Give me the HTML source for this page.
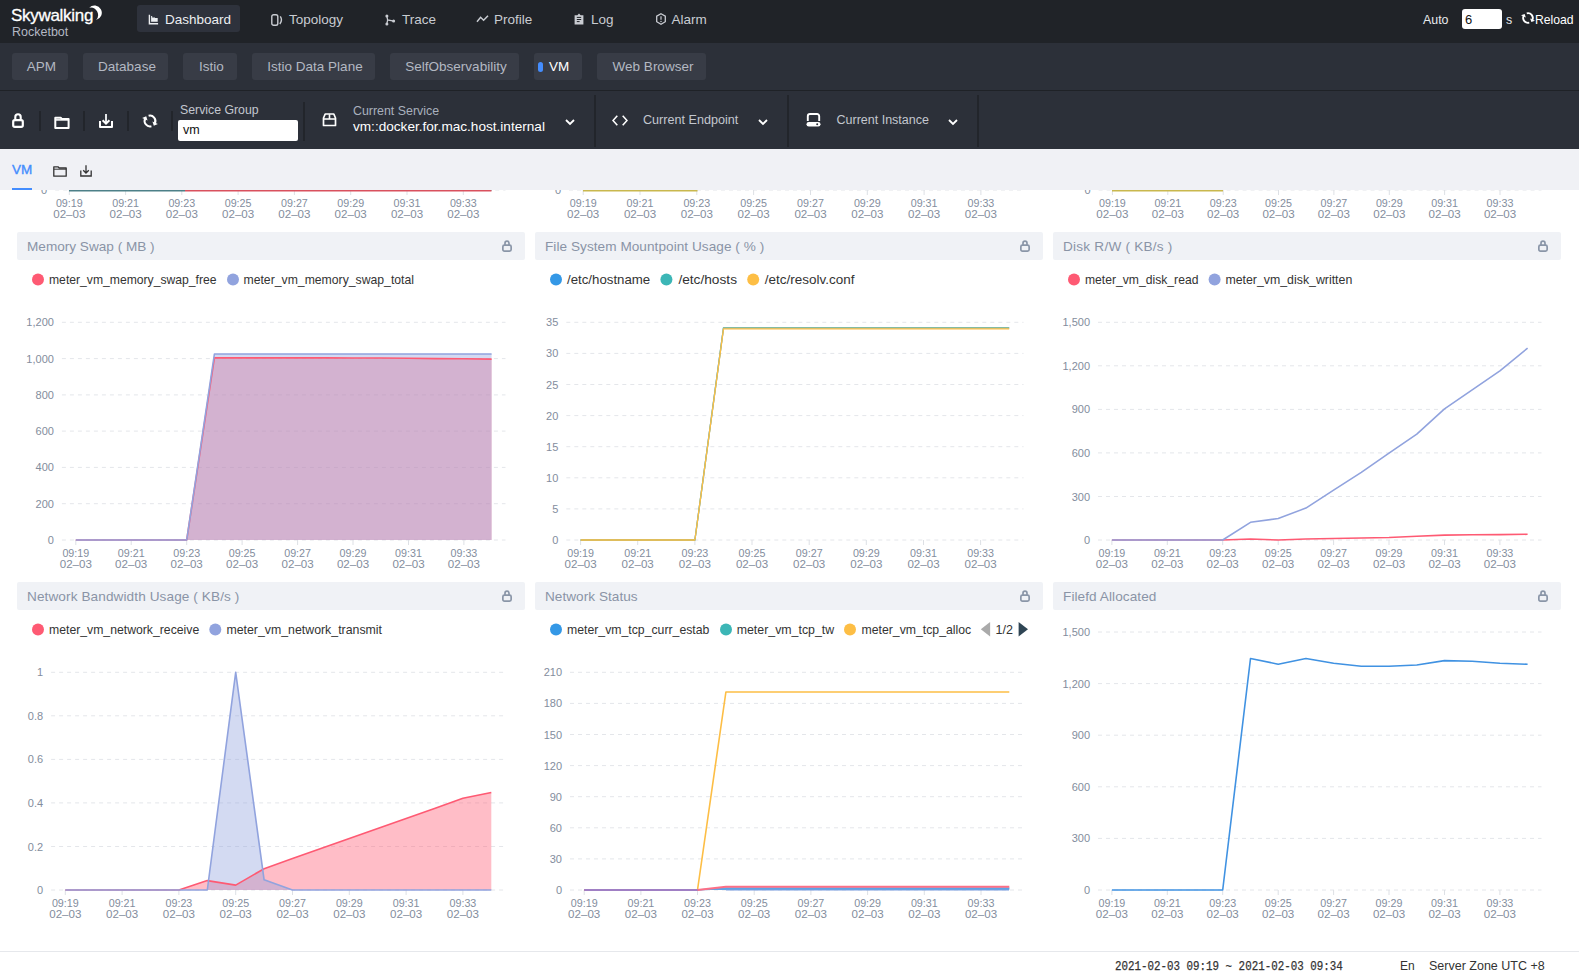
<!DOCTYPE html>
<html><head><meta charset="utf-8">
<style>
*{box-sizing:border-box}
html,body{margin:0;padding:0}
body{width:1579px;height:977px;overflow:hidden;position:relative;background:#fff;font-family:"Liberation Sans",sans-serif;}
.abs{position:absolute}
#charts{position:absolute;left:0;top:0;}
.lt{font-family:"Liberation Sans",sans-serif;font-size:12.2px;fill:#333}
.ax{font-family:"Liberation Sans",sans-serif;font-size:11px;fill:#838d9d}
#hdr{position:absolute;left:0;top:0;width:1579px;height:43px;background:#202328}
#nav{position:absolute;left:0;top:43px;width:1579px;height:47px;background:#2c3039}
#bar{position:absolute;left:0;top:90px;width:1579px;height:59px;background:#2c3039;border-top:1px solid #1f2227}
#sub{position:absolute;left:0;top:149px;width:1579px;height:41px;background:#f0f1f5}
#foot{position:absolute;left:0;top:951px;width:1579px;height:26px;background:#fff;border-top:1px solid #e6e8ec}
.logo1{position:absolute;left:11px;top:6px;font-size:17px;color:#fff;letter-spacing:-0.3px;-webkit-text-stroke:0.3px #fff}
.logo2{position:absolute;left:12px;top:25px;font-size:12.5px;color:#b3b8c4}
.nv{position:absolute;top:5px;height:27px;line-height:29.5px;font-size:13.5px;color:#c9ccd2;white-space:nowrap}
.nv svg{position:absolute}
.nv.act{background:#2e323c;border-radius:3px;color:#eceef1}
.tab{position:absolute;top:10px;height:27px;line-height:27px;font-size:13.5px;color:#b3b8c2;background:#383c46;border-radius:3px;text-align:center;white-space:nowrap;padding-left:3px}
.tab.act{color:#fff}
.sep{position:absolute;width:2px;background:#22252b}
.ico{position:absolute}
.lbl{position:absolute;white-space:nowrap}
.ph{position:absolute;width:508px;height:28px;background:#f0f2f6;border-radius:2px;color:#8a94a6;font-size:13.6px;line-height:30px;padding-left:10px;white-space:nowrap}
.ph .lk{position:absolute;right:13px;top:8px}
.lg{position:absolute;height:16px;white-space:nowrap;font-size:12.2px;color:#333;line-height:16px}
.li{display:inline-block;margin-right:10.5px}
.li i{display:inline-block;width:12px;height:12px;border-radius:6px;vertical-align:top;margin-top:2px;margin-right:5px}
</style></head>
<body>
<svg id="charts" width="1579" height="977" viewBox="0 0 1579 977">
<line x1="55.2" y1="190.0" x2="505.5" y2="190.0" stroke="#e4e6ea" stroke-width="1" stroke-dasharray="4 4"/>
<text x="47.2" y="194.0" text-anchor="end" class="ax">0</text>
<line x1="55.2" y1="-28.0" x2="505.5" y2="-28.0" stroke="#e4e6ea" stroke-width="1" stroke-dasharray="4 4"/>
<text x="47.2" y="-24.0" text-anchor="end" class="ax">1</text>
<line x1="69.3" y1="190" x2="69.3" y2="195" stroke="#dde0e5" stroke-width="1"/>
<text x="69.3" y="207" text-anchor="middle" class="ax" textLength="26.8" lengthAdjust="spacingAndGlyphs">09:19</text>
<text x="69.3" y="218" text-anchor="middle" class="ax" textLength="32.2" lengthAdjust="spacingAndGlyphs">02&#8211;03</text>
<line x1="125.6" y1="190" x2="125.6" y2="195" stroke="#dde0e5" stroke-width="1"/>
<text x="125.6" y="207" text-anchor="middle" class="ax" textLength="26.8" lengthAdjust="spacingAndGlyphs">09:21</text>
<text x="125.6" y="218" text-anchor="middle" class="ax" textLength="32.2" lengthAdjust="spacingAndGlyphs">02&#8211;03</text>
<line x1="181.8" y1="190" x2="181.8" y2="195" stroke="#dde0e5" stroke-width="1"/>
<text x="181.8" y="207" text-anchor="middle" class="ax" textLength="26.8" lengthAdjust="spacingAndGlyphs">09:23</text>
<text x="181.8" y="218" text-anchor="middle" class="ax" textLength="32.2" lengthAdjust="spacingAndGlyphs">02&#8211;03</text>
<line x1="238.1" y1="190" x2="238.1" y2="195" stroke="#dde0e5" stroke-width="1"/>
<text x="238.1" y="207" text-anchor="middle" class="ax" textLength="26.8" lengthAdjust="spacingAndGlyphs">09:25</text>
<text x="238.1" y="218" text-anchor="middle" class="ax" textLength="32.2" lengthAdjust="spacingAndGlyphs">02&#8211;03</text>
<line x1="294.4" y1="190" x2="294.4" y2="195" stroke="#dde0e5" stroke-width="1"/>
<text x="294.4" y="207" text-anchor="middle" class="ax" textLength="26.8" lengthAdjust="spacingAndGlyphs">09:27</text>
<text x="294.4" y="218" text-anchor="middle" class="ax" textLength="32.2" lengthAdjust="spacingAndGlyphs">02&#8211;03</text>
<line x1="350.7" y1="190" x2="350.7" y2="195" stroke="#dde0e5" stroke-width="1"/>
<text x="350.7" y="207" text-anchor="middle" class="ax" textLength="26.8" lengthAdjust="spacingAndGlyphs">09:29</text>
<text x="350.7" y="218" text-anchor="middle" class="ax" textLength="32.2" lengthAdjust="spacingAndGlyphs">02&#8211;03</text>
<line x1="407.0" y1="190" x2="407.0" y2="195" stroke="#dde0e5" stroke-width="1"/>
<text x="407.0" y="207" text-anchor="middle" class="ax" textLength="26.8" lengthAdjust="spacingAndGlyphs">09:31</text>
<text x="407.0" y="218" text-anchor="middle" class="ax" textLength="32.2" lengthAdjust="spacingAndGlyphs">02&#8211;03</text>
<line x1="463.3" y1="190" x2="463.3" y2="195" stroke="#dde0e5" stroke-width="1"/>
<text x="463.3" y="207" text-anchor="middle" class="ax" textLength="26.8" lengthAdjust="spacingAndGlyphs">09:33</text>
<text x="463.3" y="218" text-anchor="middle" class="ax" textLength="32.2" lengthAdjust="spacingAndGlyphs">02&#8211;03</text>
<path d="M69.3,190.0 L97.4,190.0 L125.6,190.0 L153.7,190.0 L181.8,190.0 L210.0,190.0 L238.1,190.0 L266.3,190.0 L294.4,190.0 L322.6,190.0 L350.7,190.0 L378.9,190.0 L407.0,190.0 L435.1,190.0 L463.3,190.0 L491.4,190.0" fill="none" stroke="#3cb6b6" stroke-width="2" stroke-linejoin="round"/>
<line x1="69" y1="190.5" x2="185" y2="190.5" stroke="#4d8088" stroke-width="2"/>
<line x1="185" y1="190.5" x2="491.5" y2="190.5" stroke="#d9515e" stroke-width="2"/>
<line x1="569" y1="190.0" x2="1023.5" y2="190.0" stroke="#e4e6ea" stroke-width="1" stroke-dasharray="4 4"/>
<text x="561" y="194.0" text-anchor="end" class="ax">0</text>
<line x1="569" y1="-28.0" x2="1023.5" y2="-28.0" stroke="#e4e6ea" stroke-width="1" stroke-dasharray="4 4"/>
<text x="561" y="-24.0" text-anchor="end" class="ax">1</text>
<line x1="583.2" y1="190" x2="583.2" y2="195" stroke="#dde0e5" stroke-width="1"/>
<text x="583.2" y="207" text-anchor="middle" class="ax" textLength="26.8" lengthAdjust="spacingAndGlyphs">09:19</text>
<text x="583.2" y="218" text-anchor="middle" class="ax" textLength="32.2" lengthAdjust="spacingAndGlyphs">02&#8211;03</text>
<line x1="640.0" y1="190" x2="640.0" y2="195" stroke="#dde0e5" stroke-width="1"/>
<text x="640.0" y="207" text-anchor="middle" class="ax" textLength="26.8" lengthAdjust="spacingAndGlyphs">09:21</text>
<text x="640.0" y="218" text-anchor="middle" class="ax" textLength="32.2" lengthAdjust="spacingAndGlyphs">02&#8211;03</text>
<line x1="696.8" y1="190" x2="696.8" y2="195" stroke="#dde0e5" stroke-width="1"/>
<text x="696.8" y="207" text-anchor="middle" class="ax" textLength="26.8" lengthAdjust="spacingAndGlyphs">09:23</text>
<text x="696.8" y="218" text-anchor="middle" class="ax" textLength="32.2" lengthAdjust="spacingAndGlyphs">02&#8211;03</text>
<line x1="753.6" y1="190" x2="753.6" y2="195" stroke="#dde0e5" stroke-width="1"/>
<text x="753.6" y="207" text-anchor="middle" class="ax" textLength="26.8" lengthAdjust="spacingAndGlyphs">09:25</text>
<text x="753.6" y="218" text-anchor="middle" class="ax" textLength="32.2" lengthAdjust="spacingAndGlyphs">02&#8211;03</text>
<line x1="810.5" y1="190" x2="810.5" y2="195" stroke="#dde0e5" stroke-width="1"/>
<text x="810.5" y="207" text-anchor="middle" class="ax" textLength="26.8" lengthAdjust="spacingAndGlyphs">09:27</text>
<text x="810.5" y="218" text-anchor="middle" class="ax" textLength="32.2" lengthAdjust="spacingAndGlyphs">02&#8211;03</text>
<line x1="867.3" y1="190" x2="867.3" y2="195" stroke="#dde0e5" stroke-width="1"/>
<text x="867.3" y="207" text-anchor="middle" class="ax" textLength="26.8" lengthAdjust="spacingAndGlyphs">09:29</text>
<text x="867.3" y="218" text-anchor="middle" class="ax" textLength="32.2" lengthAdjust="spacingAndGlyphs">02&#8211;03</text>
<line x1="924.1" y1="190" x2="924.1" y2="195" stroke="#dde0e5" stroke-width="1"/>
<text x="924.1" y="207" text-anchor="middle" class="ax" textLength="26.8" lengthAdjust="spacingAndGlyphs">09:31</text>
<text x="924.1" y="218" text-anchor="middle" class="ax" textLength="32.2" lengthAdjust="spacingAndGlyphs">02&#8211;03</text>
<line x1="980.9" y1="190" x2="980.9" y2="195" stroke="#dde0e5" stroke-width="1"/>
<text x="980.9" y="207" text-anchor="middle" class="ax" textLength="26.8" lengthAdjust="spacingAndGlyphs">09:33</text>
<text x="980.9" y="218" text-anchor="middle" class="ax" textLength="32.2" lengthAdjust="spacingAndGlyphs">02&#8211;03</text>
<line x1="583" y1="190.5" x2="697.5" y2="190.5" stroke="#c9b84e" stroke-width="2"/>
<line x1="1098.6" y1="190.0" x2="1541.5" y2="190.0" stroke="#e4e6ea" stroke-width="1" stroke-dasharray="4 4"/>
<text x="1090.6" y="194.0" text-anchor="end" class="ax">0</text>
<line x1="1098.6" y1="-28.0" x2="1541.5" y2="-28.0" stroke="#e4e6ea" stroke-width="1" stroke-dasharray="4 4"/>
<text x="1090.6" y="-24.0" text-anchor="end" class="ax">1</text>
<line x1="1112.4" y1="190" x2="1112.4" y2="195" stroke="#dde0e5" stroke-width="1"/>
<text x="1112.4" y="207" text-anchor="middle" class="ax" textLength="26.8" lengthAdjust="spacingAndGlyphs">09:19</text>
<text x="1112.4" y="218" text-anchor="middle" class="ax" textLength="32.2" lengthAdjust="spacingAndGlyphs">02&#8211;03</text>
<line x1="1167.8" y1="190" x2="1167.8" y2="195" stroke="#dde0e5" stroke-width="1"/>
<text x="1167.8" y="207" text-anchor="middle" class="ax" textLength="26.8" lengthAdjust="spacingAndGlyphs">09:21</text>
<text x="1167.8" y="218" text-anchor="middle" class="ax" textLength="32.2" lengthAdjust="spacingAndGlyphs">02&#8211;03</text>
<line x1="1223.2" y1="190" x2="1223.2" y2="195" stroke="#dde0e5" stroke-width="1"/>
<text x="1223.2" y="207" text-anchor="middle" class="ax" textLength="26.8" lengthAdjust="spacingAndGlyphs">09:23</text>
<text x="1223.2" y="218" text-anchor="middle" class="ax" textLength="32.2" lengthAdjust="spacingAndGlyphs">02&#8211;03</text>
<line x1="1278.5" y1="190" x2="1278.5" y2="195" stroke="#dde0e5" stroke-width="1"/>
<text x="1278.5" y="207" text-anchor="middle" class="ax" textLength="26.8" lengthAdjust="spacingAndGlyphs">09:25</text>
<text x="1278.5" y="218" text-anchor="middle" class="ax" textLength="32.2" lengthAdjust="spacingAndGlyphs">02&#8211;03</text>
<line x1="1333.9" y1="190" x2="1333.9" y2="195" stroke="#dde0e5" stroke-width="1"/>
<text x="1333.9" y="207" text-anchor="middle" class="ax" textLength="26.8" lengthAdjust="spacingAndGlyphs">09:27</text>
<text x="1333.9" y="218" text-anchor="middle" class="ax" textLength="32.2" lengthAdjust="spacingAndGlyphs">02&#8211;03</text>
<line x1="1389.3" y1="190" x2="1389.3" y2="195" stroke="#dde0e5" stroke-width="1"/>
<text x="1389.3" y="207" text-anchor="middle" class="ax" textLength="26.8" lengthAdjust="spacingAndGlyphs">09:29</text>
<text x="1389.3" y="218" text-anchor="middle" class="ax" textLength="32.2" lengthAdjust="spacingAndGlyphs">02&#8211;03</text>
<line x1="1444.6" y1="190" x2="1444.6" y2="195" stroke="#dde0e5" stroke-width="1"/>
<text x="1444.6" y="207" text-anchor="middle" class="ax" textLength="26.8" lengthAdjust="spacingAndGlyphs">09:31</text>
<text x="1444.6" y="218" text-anchor="middle" class="ax" textLength="32.2" lengthAdjust="spacingAndGlyphs">02&#8211;03</text>
<line x1="1500.0" y1="190" x2="1500.0" y2="195" stroke="#dde0e5" stroke-width="1"/>
<text x="1500.0" y="207" text-anchor="middle" class="ax" textLength="26.8" lengthAdjust="spacingAndGlyphs">09:33</text>
<text x="1500.0" y="218" text-anchor="middle" class="ax" textLength="32.2" lengthAdjust="spacingAndGlyphs">02&#8211;03</text>
<line x1="1112" y1="190.5" x2="1223" y2="190.5" stroke="#c9b84e" stroke-width="2"/>
<line x1="61.9" y1="540.0" x2="505.5" y2="540.0" stroke="#e4e6ea" stroke-width="1" stroke-dasharray="4 4"/>
<text x="53.9" y="544.0" text-anchor="end" class="ax">0</text>
<line x1="61.9" y1="503.7" x2="505.5" y2="503.7" stroke="#e4e6ea" stroke-width="1" stroke-dasharray="4 4"/>
<text x="53.9" y="507.7" text-anchor="end" class="ax">200</text>
<line x1="61.9" y1="467.4" x2="505.5" y2="467.4" stroke="#e4e6ea" stroke-width="1" stroke-dasharray="4 4"/>
<text x="53.9" y="471.4" text-anchor="end" class="ax">400</text>
<line x1="61.9" y1="431.1" x2="505.5" y2="431.1" stroke="#e4e6ea" stroke-width="1" stroke-dasharray="4 4"/>
<text x="53.9" y="435.1" text-anchor="end" class="ax">600</text>
<line x1="61.9" y1="394.9" x2="505.5" y2="394.9" stroke="#e4e6ea" stroke-width="1" stroke-dasharray="4 4"/>
<text x="53.9" y="398.9" text-anchor="end" class="ax">800</text>
<line x1="61.9" y1="358.6" x2="505.5" y2="358.6" stroke="#e4e6ea" stroke-width="1" stroke-dasharray="4 4"/>
<text x="53.9" y="362.6" text-anchor="end" class="ax">1,000</text>
<line x1="61.9" y1="322.3" x2="505.5" y2="322.3" stroke="#e4e6ea" stroke-width="1" stroke-dasharray="4 4"/>
<text x="53.9" y="326.3" text-anchor="end" class="ax">1,200</text>
<line x1="75.8" y1="540" x2="75.8" y2="545" stroke="#dde0e5" stroke-width="1"/>
<text x="75.8" y="557" text-anchor="middle" class="ax" textLength="26.8" lengthAdjust="spacingAndGlyphs">09:19</text>
<text x="75.8" y="568" text-anchor="middle" class="ax" textLength="32.2" lengthAdjust="spacingAndGlyphs">02&#8211;03</text>
<line x1="131.2" y1="540" x2="131.2" y2="545" stroke="#dde0e5" stroke-width="1"/>
<text x="131.2" y="557" text-anchor="middle" class="ax" textLength="26.8" lengthAdjust="spacingAndGlyphs">09:21</text>
<text x="131.2" y="568" text-anchor="middle" class="ax" textLength="32.2" lengthAdjust="spacingAndGlyphs">02&#8211;03</text>
<line x1="186.7" y1="540" x2="186.7" y2="545" stroke="#dde0e5" stroke-width="1"/>
<text x="186.7" y="557" text-anchor="middle" class="ax" textLength="26.8" lengthAdjust="spacingAndGlyphs">09:23</text>
<text x="186.7" y="568" text-anchor="middle" class="ax" textLength="32.2" lengthAdjust="spacingAndGlyphs">02&#8211;03</text>
<line x1="242.1" y1="540" x2="242.1" y2="545" stroke="#dde0e5" stroke-width="1"/>
<text x="242.1" y="557" text-anchor="middle" class="ax" textLength="26.8" lengthAdjust="spacingAndGlyphs">09:25</text>
<text x="242.1" y="568" text-anchor="middle" class="ax" textLength="32.2" lengthAdjust="spacingAndGlyphs">02&#8211;03</text>
<line x1="297.6" y1="540" x2="297.6" y2="545" stroke="#dde0e5" stroke-width="1"/>
<text x="297.6" y="557" text-anchor="middle" class="ax" textLength="26.8" lengthAdjust="spacingAndGlyphs">09:27</text>
<text x="297.6" y="568" text-anchor="middle" class="ax" textLength="32.2" lengthAdjust="spacingAndGlyphs">02&#8211;03</text>
<line x1="353.0" y1="540" x2="353.0" y2="545" stroke="#dde0e5" stroke-width="1"/>
<text x="353.0" y="557" text-anchor="middle" class="ax" textLength="26.8" lengthAdjust="spacingAndGlyphs">09:29</text>
<text x="353.0" y="568" text-anchor="middle" class="ax" textLength="32.2" lengthAdjust="spacingAndGlyphs">02&#8211;03</text>
<line x1="408.5" y1="540" x2="408.5" y2="545" stroke="#dde0e5" stroke-width="1"/>
<text x="408.5" y="557" text-anchor="middle" class="ax" textLength="26.8" lengthAdjust="spacingAndGlyphs">09:31</text>
<text x="408.5" y="568" text-anchor="middle" class="ax" textLength="32.2" lengthAdjust="spacingAndGlyphs">02&#8211;03</text>
<line x1="463.9" y1="540" x2="463.9" y2="545" stroke="#dde0e5" stroke-width="1"/>
<text x="463.9" y="557" text-anchor="middle" class="ax" textLength="26.8" lengthAdjust="spacingAndGlyphs">09:33</text>
<text x="463.9" y="568" text-anchor="middle" class="ax" textLength="32.2" lengthAdjust="spacingAndGlyphs">02&#8211;03</text>
<path d="M75.8,540.0 L103.5,540.0 L131.2,540.0 L158.9,540.0 L186.7,540.0 L214.4,357.9 L242.1,357.9 L269.8,357.9 L297.6,357.9 L325.3,357.9 L353.0,358.0 L380.7,358.0 L408.5,358.2 L436.2,358.6 L463.9,358.8 L491.6,359.1 L491.6,540 L75.8,540 Z" fill="#fe5a73" fill-opacity="0.4" stroke="none"/>
<path d="M75.8,540.0 L103.5,540.0 L131.2,540.0 L158.9,540.0 L186.7,540.0 L214.4,354.0 L242.1,354.0 L269.8,354.0 L297.6,354.0 L325.3,354.0 L353.0,354.0 L380.7,354.0 L408.5,354.0 L436.2,354.0 L463.9,354.0 L491.6,354.0 L491.6,540 L75.8,540 Z" fill="#91a3de" fill-opacity="0.4" stroke="none"/>
<path d="M75.8,540.0 L103.5,540.0 L131.2,540.0 L158.9,540.0 L186.7,540.0 L214.4,357.9 L242.1,357.9 L269.8,357.9 L297.6,357.9 L325.3,357.9 L353.0,358.0 L380.7,358.0 L408.5,358.2 L436.2,358.6 L463.9,358.8 L491.6,359.1" fill="none" stroke="#fe5a73" stroke-width="1.6" stroke-linejoin="round"/>
<path d="M75.8,540.0 L103.5,540.0 L131.2,540.0 L158.9,540.0 L186.7,540.0 L214.4,354.0 L242.1,354.0 L269.8,354.0 L297.6,354.0 L325.3,354.0 L353.0,354.0 L380.7,354.0 L408.5,354.0 L436.2,354.0 L463.9,354.0 L491.6,354.0" fill="none" stroke="#91a3de" stroke-width="1.6" stroke-linejoin="round"/>
<line x1="566.3" y1="540.0" x2="1023.5" y2="540.0" stroke="#e4e6ea" stroke-width="1" stroke-dasharray="4 4"/>
<text x="558.3" y="544.0" text-anchor="end" class="ax">0</text>
<line x1="566.3" y1="508.9" x2="1023.5" y2="508.9" stroke="#e4e6ea" stroke-width="1" stroke-dasharray="4 4"/>
<text x="558.3" y="512.9" text-anchor="end" class="ax">5</text>
<line x1="566.3" y1="477.8" x2="1023.5" y2="477.8" stroke="#e4e6ea" stroke-width="1" stroke-dasharray="4 4"/>
<text x="558.3" y="481.8" text-anchor="end" class="ax">10</text>
<line x1="566.3" y1="446.7" x2="1023.5" y2="446.7" stroke="#e4e6ea" stroke-width="1" stroke-dasharray="4 4"/>
<text x="558.3" y="450.7" text-anchor="end" class="ax">15</text>
<line x1="566.3" y1="415.6" x2="1023.5" y2="415.6" stroke="#e4e6ea" stroke-width="1" stroke-dasharray="4 4"/>
<text x="558.3" y="419.6" text-anchor="end" class="ax">20</text>
<line x1="566.3" y1="384.5" x2="1023.5" y2="384.5" stroke="#e4e6ea" stroke-width="1" stroke-dasharray="4 4"/>
<text x="558.3" y="388.5" text-anchor="end" class="ax">25</text>
<line x1="566.3" y1="353.4" x2="1023.5" y2="353.4" stroke="#e4e6ea" stroke-width="1" stroke-dasharray="4 4"/>
<text x="558.3" y="357.4" text-anchor="end" class="ax">30</text>
<line x1="566.3" y1="322.3" x2="1023.5" y2="322.3" stroke="#e4e6ea" stroke-width="1" stroke-dasharray="4 4"/>
<text x="558.3" y="326.3" text-anchor="end" class="ax">35</text>
<line x1="580.6" y1="540" x2="580.6" y2="545" stroke="#dde0e5" stroke-width="1"/>
<text x="580.6" y="557" text-anchor="middle" class="ax" textLength="26.8" lengthAdjust="spacingAndGlyphs">09:19</text>
<text x="580.6" y="568" text-anchor="middle" class="ax" textLength="32.2" lengthAdjust="spacingAndGlyphs">02&#8211;03</text>
<line x1="637.7" y1="540" x2="637.7" y2="545" stroke="#dde0e5" stroke-width="1"/>
<text x="637.7" y="557" text-anchor="middle" class="ax" textLength="26.8" lengthAdjust="spacingAndGlyphs">09:21</text>
<text x="637.7" y="568" text-anchor="middle" class="ax" textLength="32.2" lengthAdjust="spacingAndGlyphs">02&#8211;03</text>
<line x1="694.9" y1="540" x2="694.9" y2="545" stroke="#dde0e5" stroke-width="1"/>
<text x="694.9" y="557" text-anchor="middle" class="ax" textLength="26.8" lengthAdjust="spacingAndGlyphs">09:23</text>
<text x="694.9" y="568" text-anchor="middle" class="ax" textLength="32.2" lengthAdjust="spacingAndGlyphs">02&#8211;03</text>
<line x1="752.0" y1="540" x2="752.0" y2="545" stroke="#dde0e5" stroke-width="1"/>
<text x="752.0" y="557" text-anchor="middle" class="ax" textLength="26.8" lengthAdjust="spacingAndGlyphs">09:25</text>
<text x="752.0" y="568" text-anchor="middle" class="ax" textLength="32.2" lengthAdjust="spacingAndGlyphs">02&#8211;03</text>
<line x1="809.2" y1="540" x2="809.2" y2="545" stroke="#dde0e5" stroke-width="1"/>
<text x="809.2" y="557" text-anchor="middle" class="ax" textLength="26.8" lengthAdjust="spacingAndGlyphs">09:27</text>
<text x="809.2" y="568" text-anchor="middle" class="ax" textLength="32.2" lengthAdjust="spacingAndGlyphs">02&#8211;03</text>
<line x1="866.3" y1="540" x2="866.3" y2="545" stroke="#dde0e5" stroke-width="1"/>
<text x="866.3" y="557" text-anchor="middle" class="ax" textLength="26.8" lengthAdjust="spacingAndGlyphs">09:29</text>
<text x="866.3" y="568" text-anchor="middle" class="ax" textLength="32.2" lengthAdjust="spacingAndGlyphs">02&#8211;03</text>
<line x1="923.5" y1="540" x2="923.5" y2="545" stroke="#dde0e5" stroke-width="1"/>
<text x="923.5" y="557" text-anchor="middle" class="ax" textLength="26.8" lengthAdjust="spacingAndGlyphs">09:31</text>
<text x="923.5" y="568" text-anchor="middle" class="ax" textLength="32.2" lengthAdjust="spacingAndGlyphs">02&#8211;03</text>
<line x1="980.6" y1="540" x2="980.6" y2="545" stroke="#dde0e5" stroke-width="1"/>
<text x="980.6" y="557" text-anchor="middle" class="ax" textLength="26.8" lengthAdjust="spacingAndGlyphs">09:33</text>
<text x="980.6" y="568" text-anchor="middle" class="ax" textLength="32.2" lengthAdjust="spacingAndGlyphs">02&#8211;03</text>
<path d="M580.6,540.0 L609.2,540.0 L637.7,540.0 L666.3,540.0 L694.9,540.0 L723.5,327.9 L752.0,327.9 L780.6,327.9 L809.2,327.9 L837.8,327.9 L866.3,327.9 L894.9,327.9 L923.5,327.9 L952.1,327.9 L980.6,327.9 L1009.2,327.9" fill="none" stroke="#3498e6" stroke-width="1.3" stroke-linejoin="round"/>
<path d="M580.6,540.0 L609.2,540.0 L637.7,540.0 L666.3,540.0 L694.9,540.0 L723.5,327.9 L752.0,327.9 L780.6,327.9 L809.2,327.9 L837.8,327.9 L866.3,327.9 L894.9,327.9 L923.5,327.9 L952.1,327.9 L980.6,327.9 L1009.2,327.9" fill="none" stroke="#8fbf8a" stroke-width="1.3" stroke-linejoin="round"/>
<path d="M580.6,540.0 L609.2,540.0 L637.7,540.0 L666.3,540.0 L694.9,540.0 L723.5,328.8 L752.0,328.8 L780.6,328.8 L809.2,328.8 L837.8,328.8 L866.3,328.8 L894.9,328.8 L923.5,328.8 L952.1,328.8 L980.6,328.8 L1009.2,328.8" fill="none" stroke="#fdbe45" stroke-width="1.3" stroke-linejoin="round"/>
<line x1="1098" y1="540.0" x2="1541.5" y2="540.0" stroke="#e4e6ea" stroke-width="1" stroke-dasharray="4 4"/>
<text x="1090" y="544.0" text-anchor="end" class="ax">0</text>
<line x1="1098" y1="496.5" x2="1541.5" y2="496.5" stroke="#e4e6ea" stroke-width="1" stroke-dasharray="4 4"/>
<text x="1090" y="500.5" text-anchor="end" class="ax">300</text>
<line x1="1098" y1="452.9" x2="1541.5" y2="452.9" stroke="#e4e6ea" stroke-width="1" stroke-dasharray="4 4"/>
<text x="1090" y="456.9" text-anchor="end" class="ax">600</text>
<line x1="1098" y1="409.4" x2="1541.5" y2="409.4" stroke="#e4e6ea" stroke-width="1" stroke-dasharray="4 4"/>
<text x="1090" y="413.4" text-anchor="end" class="ax">900</text>
<line x1="1098" y1="365.8" x2="1541.5" y2="365.8" stroke="#e4e6ea" stroke-width="1" stroke-dasharray="4 4"/>
<text x="1090" y="369.8" text-anchor="end" class="ax">1,200</text>
<line x1="1098" y1="322.3" x2="1541.5" y2="322.3" stroke="#e4e6ea" stroke-width="1" stroke-dasharray="4 4"/>
<text x="1090" y="326.3" text-anchor="end" class="ax">1,500</text>
<line x1="1111.9" y1="540" x2="1111.9" y2="545" stroke="#dde0e5" stroke-width="1"/>
<text x="1111.9" y="557" text-anchor="middle" class="ax" textLength="26.8" lengthAdjust="spacingAndGlyphs">09:19</text>
<text x="1111.9" y="568" text-anchor="middle" class="ax" textLength="32.2" lengthAdjust="spacingAndGlyphs">02&#8211;03</text>
<line x1="1167.3" y1="540" x2="1167.3" y2="545" stroke="#dde0e5" stroke-width="1"/>
<text x="1167.3" y="557" text-anchor="middle" class="ax" textLength="26.8" lengthAdjust="spacingAndGlyphs">09:21</text>
<text x="1167.3" y="568" text-anchor="middle" class="ax" textLength="32.2" lengthAdjust="spacingAndGlyphs">02&#8211;03</text>
<line x1="1222.7" y1="540" x2="1222.7" y2="545" stroke="#dde0e5" stroke-width="1"/>
<text x="1222.7" y="557" text-anchor="middle" class="ax" textLength="26.8" lengthAdjust="spacingAndGlyphs">09:23</text>
<text x="1222.7" y="568" text-anchor="middle" class="ax" textLength="32.2" lengthAdjust="spacingAndGlyphs">02&#8211;03</text>
<line x1="1278.2" y1="540" x2="1278.2" y2="545" stroke="#dde0e5" stroke-width="1"/>
<text x="1278.2" y="557" text-anchor="middle" class="ax" textLength="26.8" lengthAdjust="spacingAndGlyphs">09:25</text>
<text x="1278.2" y="568" text-anchor="middle" class="ax" textLength="32.2" lengthAdjust="spacingAndGlyphs">02&#8211;03</text>
<line x1="1333.6" y1="540" x2="1333.6" y2="545" stroke="#dde0e5" stroke-width="1"/>
<text x="1333.6" y="557" text-anchor="middle" class="ax" textLength="26.8" lengthAdjust="spacingAndGlyphs">09:27</text>
<text x="1333.6" y="568" text-anchor="middle" class="ax" textLength="32.2" lengthAdjust="spacingAndGlyphs">02&#8211;03</text>
<line x1="1389.0" y1="540" x2="1389.0" y2="545" stroke="#dde0e5" stroke-width="1"/>
<text x="1389.0" y="557" text-anchor="middle" class="ax" textLength="26.8" lengthAdjust="spacingAndGlyphs">09:29</text>
<text x="1389.0" y="568" text-anchor="middle" class="ax" textLength="32.2" lengthAdjust="spacingAndGlyphs">02&#8211;03</text>
<line x1="1444.5" y1="540" x2="1444.5" y2="545" stroke="#dde0e5" stroke-width="1"/>
<text x="1444.5" y="557" text-anchor="middle" class="ax" textLength="26.8" lengthAdjust="spacingAndGlyphs">09:31</text>
<text x="1444.5" y="568" text-anchor="middle" class="ax" textLength="32.2" lengthAdjust="spacingAndGlyphs">02&#8211;03</text>
<line x1="1499.9" y1="540" x2="1499.9" y2="545" stroke="#dde0e5" stroke-width="1"/>
<text x="1499.9" y="557" text-anchor="middle" class="ax" textLength="26.8" lengthAdjust="spacingAndGlyphs">09:33</text>
<text x="1499.9" y="568" text-anchor="middle" class="ax" textLength="32.2" lengthAdjust="spacingAndGlyphs">02&#8211;03</text>
<path d="M1111.9,540.0 L1139.6,540.0 L1167.3,540.0 L1195.0,540.0 L1222.7,540.0 L1250.5,539.0 L1278.2,540.0 L1305.9,539.0 L1333.6,538.5 L1361.3,538.0 L1389.0,537.5 L1416.8,536.2 L1444.5,535.1 L1472.2,534.8 L1499.9,534.6 L1527.6,534.3" fill="none" stroke="#fe5a73" stroke-width="1.6" stroke-linejoin="round"/>
<path d="M1111.9,540.0 L1139.6,540.0 L1167.3,540.0 L1195.0,540.0 L1222.7,540.0 L1250.5,522.3 L1278.2,518.5 L1305.9,508.1 L1333.6,490.1 L1361.3,472.4 L1389.0,453.2 L1416.8,434.2 L1444.5,408.9 L1472.2,389.9 L1499.9,370.8 L1527.6,348.1" fill="none" stroke="#91a3de" stroke-width="1.6" stroke-linejoin="round"/>
<line x1="51.1" y1="890.0" x2="505.5" y2="890.0" stroke="#e4e6ea" stroke-width="1" stroke-dasharray="4 4"/>
<text x="43.1" y="894.0" text-anchor="end" class="ax">0</text>
<line x1="51.1" y1="846.5" x2="505.5" y2="846.5" stroke="#e4e6ea" stroke-width="1" stroke-dasharray="4 4"/>
<text x="43.1" y="850.5" text-anchor="end" class="ax">0.2</text>
<line x1="51.1" y1="802.9" x2="505.5" y2="802.9" stroke="#e4e6ea" stroke-width="1" stroke-dasharray="4 4"/>
<text x="43.1" y="806.9" text-anchor="end" class="ax">0.4</text>
<line x1="51.1" y1="759.4" x2="505.5" y2="759.4" stroke="#e4e6ea" stroke-width="1" stroke-dasharray="4 4"/>
<text x="43.1" y="763.4" text-anchor="end" class="ax">0.6</text>
<line x1="51.1" y1="715.8" x2="505.5" y2="715.8" stroke="#e4e6ea" stroke-width="1" stroke-dasharray="4 4"/>
<text x="43.1" y="719.8" text-anchor="end" class="ax">0.8</text>
<line x1="51.1" y1="672.3" x2="505.5" y2="672.3" stroke="#e4e6ea" stroke-width="1" stroke-dasharray="4 4"/>
<text x="43.1" y="676.3" text-anchor="end" class="ax">1</text>
<line x1="65.3" y1="890" x2="65.3" y2="895" stroke="#dde0e5" stroke-width="1"/>
<text x="65.3" y="907" text-anchor="middle" class="ax" textLength="26.8" lengthAdjust="spacingAndGlyphs">09:19</text>
<text x="65.3" y="918" text-anchor="middle" class="ax" textLength="32.2" lengthAdjust="spacingAndGlyphs">02&#8211;03</text>
<line x1="122.1" y1="890" x2="122.1" y2="895" stroke="#dde0e5" stroke-width="1"/>
<text x="122.1" y="907" text-anchor="middle" class="ax" textLength="26.8" lengthAdjust="spacingAndGlyphs">09:21</text>
<text x="122.1" y="918" text-anchor="middle" class="ax" textLength="32.2" lengthAdjust="spacingAndGlyphs">02&#8211;03</text>
<line x1="178.9" y1="890" x2="178.9" y2="895" stroke="#dde0e5" stroke-width="1"/>
<text x="178.9" y="907" text-anchor="middle" class="ax" textLength="26.8" lengthAdjust="spacingAndGlyphs">09:23</text>
<text x="178.9" y="918" text-anchor="middle" class="ax" textLength="32.2" lengthAdjust="spacingAndGlyphs">02&#8211;03</text>
<line x1="235.7" y1="890" x2="235.7" y2="895" stroke="#dde0e5" stroke-width="1"/>
<text x="235.7" y="907" text-anchor="middle" class="ax" textLength="26.8" lengthAdjust="spacingAndGlyphs">09:25</text>
<text x="235.7" y="918" text-anchor="middle" class="ax" textLength="32.2" lengthAdjust="spacingAndGlyphs">02&#8211;03</text>
<line x1="292.5" y1="890" x2="292.5" y2="895" stroke="#dde0e5" stroke-width="1"/>
<text x="292.5" y="907" text-anchor="middle" class="ax" textLength="26.8" lengthAdjust="spacingAndGlyphs">09:27</text>
<text x="292.5" y="918" text-anchor="middle" class="ax" textLength="32.2" lengthAdjust="spacingAndGlyphs">02&#8211;03</text>
<line x1="349.3" y1="890" x2="349.3" y2="895" stroke="#dde0e5" stroke-width="1"/>
<text x="349.3" y="907" text-anchor="middle" class="ax" textLength="26.8" lengthAdjust="spacingAndGlyphs">09:29</text>
<text x="349.3" y="918" text-anchor="middle" class="ax" textLength="32.2" lengthAdjust="spacingAndGlyphs">02&#8211;03</text>
<line x1="406.1" y1="890" x2="406.1" y2="895" stroke="#dde0e5" stroke-width="1"/>
<text x="406.1" y="907" text-anchor="middle" class="ax" textLength="26.8" lengthAdjust="spacingAndGlyphs">09:31</text>
<text x="406.1" y="918" text-anchor="middle" class="ax" textLength="32.2" lengthAdjust="spacingAndGlyphs">02&#8211;03</text>
<line x1="462.9" y1="890" x2="462.9" y2="895" stroke="#dde0e5" stroke-width="1"/>
<text x="462.9" y="907" text-anchor="middle" class="ax" textLength="26.8" lengthAdjust="spacingAndGlyphs">09:33</text>
<text x="462.9" y="918" text-anchor="middle" class="ax" textLength="32.2" lengthAdjust="spacingAndGlyphs">02&#8211;03</text>
<path d="M65.3,890.0 L93.7,890.0 L122.1,890.0 L150.5,890.0 L178.9,890.0 L207.3,880.6 L235.7,885.1 L264.1,868.7 L292.5,858.6 L320.9,848.6 L349.3,838.5 L377.7,828.5 L406.1,818.4 L434.5,808.4 L462.9,798.3 L491.3,792.5 L491.3,890 L65.3,890 Z" fill="#fe5a73" fill-opacity="0.4" stroke="none"/>
<path d="M65.3,890.0 L93.7,890.0 L122.1,890.0 L150.5,890.0 L178.9,890.0 L207.3,890.0 L235.7,672.3 L264.1,879.8 L292.5,890.0 L320.9,890.0 L349.3,890.0 L377.7,890.0 L406.1,890.0 L434.5,890.0 L462.9,890.0 L491.3,890.0 L491.3,890 L65.3,890 Z" fill="#91a3de" fill-opacity="0.4" stroke="none"/>
<path d="M65.3,890.0 L93.7,890.0 L122.1,890.0 L150.5,890.0 L178.9,890.0 L207.3,880.6 L235.7,885.1 L264.1,868.7 L292.5,858.6 L320.9,848.6 L349.3,838.5 L377.7,828.5 L406.1,818.4 L434.5,808.4 L462.9,798.3 L491.3,792.5" fill="none" stroke="#fe5a73" stroke-width="1.6" stroke-linejoin="round"/>
<path d="M65.3,890.0 L93.7,890.0 L122.1,890.0 L150.5,890.0 L178.9,890.0 L207.3,890.0 L235.7,672.3 L264.1,879.8 L292.5,890.0 L320.9,890.0 L349.3,890.0 L377.7,890.0 L406.1,890.0 L434.5,890.0 L462.9,890.0 L491.3,890.0" fill="none" stroke="#91a3de" stroke-width="1.6" stroke-linejoin="round"/>
<line x1="570.0" y1="890.0" x2="1023.5" y2="890.0" stroke="#e4e6ea" stroke-width="1" stroke-dasharray="4 4"/>
<text x="562.0" y="894.0" text-anchor="end" class="ax">0</text>
<line x1="570.0" y1="858.9" x2="1023.5" y2="858.9" stroke="#e4e6ea" stroke-width="1" stroke-dasharray="4 4"/>
<text x="562.0" y="862.9" text-anchor="end" class="ax">30</text>
<line x1="570.0" y1="827.8" x2="1023.5" y2="827.8" stroke="#e4e6ea" stroke-width="1" stroke-dasharray="4 4"/>
<text x="562.0" y="831.8" text-anchor="end" class="ax">60</text>
<line x1="570.0" y1="796.7" x2="1023.5" y2="796.7" stroke="#e4e6ea" stroke-width="1" stroke-dasharray="4 4"/>
<text x="562.0" y="800.7" text-anchor="end" class="ax">90</text>
<line x1="570.0" y1="765.6" x2="1023.5" y2="765.6" stroke="#e4e6ea" stroke-width="1" stroke-dasharray="4 4"/>
<text x="562.0" y="769.6" text-anchor="end" class="ax">120</text>
<line x1="570.0" y1="734.5" x2="1023.5" y2="734.5" stroke="#e4e6ea" stroke-width="1" stroke-dasharray="4 4"/>
<text x="562.0" y="738.5" text-anchor="end" class="ax">150</text>
<line x1="570.0" y1="703.4" x2="1023.5" y2="703.4" stroke="#e4e6ea" stroke-width="1" stroke-dasharray="4 4"/>
<text x="562.0" y="707.4" text-anchor="end" class="ax">180</text>
<line x1="570.0" y1="672.3" x2="1023.5" y2="672.3" stroke="#e4e6ea" stroke-width="1" stroke-dasharray="4 4"/>
<text x="562.0" y="676.3" text-anchor="end" class="ax">210</text>
<line x1="584.2" y1="890" x2="584.2" y2="895" stroke="#dde0e5" stroke-width="1"/>
<text x="584.2" y="907" text-anchor="middle" class="ax" textLength="26.8" lengthAdjust="spacingAndGlyphs">09:19</text>
<text x="584.2" y="918" text-anchor="middle" class="ax" textLength="32.2" lengthAdjust="spacingAndGlyphs">02&#8211;03</text>
<line x1="640.9" y1="890" x2="640.9" y2="895" stroke="#dde0e5" stroke-width="1"/>
<text x="640.9" y="907" text-anchor="middle" class="ax" textLength="26.8" lengthAdjust="spacingAndGlyphs">09:21</text>
<text x="640.9" y="918" text-anchor="middle" class="ax" textLength="32.2" lengthAdjust="spacingAndGlyphs">02&#8211;03</text>
<line x1="697.5" y1="890" x2="697.5" y2="895" stroke="#dde0e5" stroke-width="1"/>
<text x="697.5" y="907" text-anchor="middle" class="ax" textLength="26.8" lengthAdjust="spacingAndGlyphs">09:23</text>
<text x="697.5" y="918" text-anchor="middle" class="ax" textLength="32.2" lengthAdjust="spacingAndGlyphs">02&#8211;03</text>
<line x1="754.2" y1="890" x2="754.2" y2="895" stroke="#dde0e5" stroke-width="1"/>
<text x="754.2" y="907" text-anchor="middle" class="ax" textLength="26.8" lengthAdjust="spacingAndGlyphs">09:25</text>
<text x="754.2" y="918" text-anchor="middle" class="ax" textLength="32.2" lengthAdjust="spacingAndGlyphs">02&#8211;03</text>
<line x1="810.9" y1="890" x2="810.9" y2="895" stroke="#dde0e5" stroke-width="1"/>
<text x="810.9" y="907" text-anchor="middle" class="ax" textLength="26.8" lengthAdjust="spacingAndGlyphs">09:27</text>
<text x="810.9" y="918" text-anchor="middle" class="ax" textLength="32.2" lengthAdjust="spacingAndGlyphs">02&#8211;03</text>
<line x1="867.6" y1="890" x2="867.6" y2="895" stroke="#dde0e5" stroke-width="1"/>
<text x="867.6" y="907" text-anchor="middle" class="ax" textLength="26.8" lengthAdjust="spacingAndGlyphs">09:29</text>
<text x="867.6" y="918" text-anchor="middle" class="ax" textLength="32.2" lengthAdjust="spacingAndGlyphs">02&#8211;03</text>
<line x1="924.3" y1="890" x2="924.3" y2="895" stroke="#dde0e5" stroke-width="1"/>
<text x="924.3" y="907" text-anchor="middle" class="ax" textLength="26.8" lengthAdjust="spacingAndGlyphs">09:31</text>
<text x="924.3" y="918" text-anchor="middle" class="ax" textLength="32.2" lengthAdjust="spacingAndGlyphs">02&#8211;03</text>
<line x1="981.0" y1="890" x2="981.0" y2="895" stroke="#dde0e5" stroke-width="1"/>
<text x="981.0" y="907" text-anchor="middle" class="ax" textLength="26.8" lengthAdjust="spacingAndGlyphs">09:33</text>
<text x="981.0" y="918" text-anchor="middle" class="ax" textLength="32.2" lengthAdjust="spacingAndGlyphs">02&#8211;03</text>
<path d="M584.2,890.0 L612.5,890.0 L640.9,890.0 L669.2,890.0 L697.5,890.0 L725.9,888.0 L754.2,888.0 L782.6,888.0 L810.9,888.0 L839.3,888.0 L867.6,888.0 L896.0,888.0 L924.3,888.0 L952.6,888.0 L981.0,888.0 L1009.3,888.0 L1009.3,890 L584.2,890 Z" fill="#5fa3e4" fill-opacity="1.0" stroke="none"/>
<path d="M584.2,890.0 L612.5,890.0 L640.9,890.0 L669.2,890.0 L697.5,890.0 L725.9,692.0 L754.2,692.0 L782.6,692.0 L810.9,692.0 L839.3,692.0 L867.6,692.0 L896.0,692.0 L924.3,692.0 L952.6,692.0 L981.0,692.0 L1009.3,692.0" fill="none" stroke="#fdbe45" stroke-width="1.6" stroke-linejoin="round"/>
<path d="M584.2,890.0 L612.5,890.0 L640.9,890.0 L669.2,890.0 L697.5,890.0 L725.9,888.0 L754.2,888.0 L782.6,888.0 L810.9,888.0 L839.3,888.0 L867.6,888.0 L896.0,888.0 L924.3,888.0 L952.6,888.0 L981.0,888.0 L1009.3,888.0" fill="none" stroke="#5fa3e4" stroke-width="1.5" stroke-linejoin="round"/>
<path d="M584.2,890.0 L612.5,890.0 L640.9,890.0 L669.2,890.0 L697.5,890.0 L725.9,886.8 L754.2,886.8 L782.6,886.8 L810.9,886.8 L839.3,886.8 L867.6,886.8 L896.0,886.8 L924.3,886.8 L952.6,886.8 L981.0,886.8 L1009.3,886.8" fill="none" stroke="#fd6f86" stroke-width="2" stroke-linejoin="round"/>
<line x1="584.2" y1="890" x2="697.6" y2="890" stroke="#a07fc4" stroke-width="2"/>
<line x1="726" y1="890" x2="1009" y2="890" stroke="#7b9de0" stroke-width="1.2"/>
<line x1="1098" y1="890.0" x2="1541.5" y2="890.0" stroke="#e4e6ea" stroke-width="1" stroke-dasharray="4 4"/>
<text x="1090" y="894.0" text-anchor="end" class="ax">0</text>
<line x1="1098" y1="838.4" x2="1541.5" y2="838.4" stroke="#e4e6ea" stroke-width="1" stroke-dasharray="4 4"/>
<text x="1090" y="842.4" text-anchor="end" class="ax">300</text>
<line x1="1098" y1="786.8" x2="1541.5" y2="786.8" stroke="#e4e6ea" stroke-width="1" stroke-dasharray="4 4"/>
<text x="1090" y="790.8" text-anchor="end" class="ax">600</text>
<line x1="1098" y1="735.2" x2="1541.5" y2="735.2" stroke="#e4e6ea" stroke-width="1" stroke-dasharray="4 4"/>
<text x="1090" y="739.2" text-anchor="end" class="ax">900</text>
<line x1="1098" y1="683.6" x2="1541.5" y2="683.6" stroke="#e4e6ea" stroke-width="1" stroke-dasharray="4 4"/>
<text x="1090" y="687.6" text-anchor="end" class="ax">1,200</text>
<line x1="1098" y1="632.0" x2="1541.5" y2="632.0" stroke="#e4e6ea" stroke-width="1" stroke-dasharray="4 4"/>
<text x="1090" y="636.0" text-anchor="end" class="ax">1,500</text>
<line x1="1111.9" y1="890" x2="1111.9" y2="895" stroke="#dde0e5" stroke-width="1"/>
<text x="1111.9" y="907" text-anchor="middle" class="ax" textLength="26.8" lengthAdjust="spacingAndGlyphs">09:19</text>
<text x="1111.9" y="918" text-anchor="middle" class="ax" textLength="32.2" lengthAdjust="spacingAndGlyphs">02&#8211;03</text>
<line x1="1167.3" y1="890" x2="1167.3" y2="895" stroke="#dde0e5" stroke-width="1"/>
<text x="1167.3" y="907" text-anchor="middle" class="ax" textLength="26.8" lengthAdjust="spacingAndGlyphs">09:21</text>
<text x="1167.3" y="918" text-anchor="middle" class="ax" textLength="32.2" lengthAdjust="spacingAndGlyphs">02&#8211;03</text>
<line x1="1222.7" y1="890" x2="1222.7" y2="895" stroke="#dde0e5" stroke-width="1"/>
<text x="1222.7" y="907" text-anchor="middle" class="ax" textLength="26.8" lengthAdjust="spacingAndGlyphs">09:23</text>
<text x="1222.7" y="918" text-anchor="middle" class="ax" textLength="32.2" lengthAdjust="spacingAndGlyphs">02&#8211;03</text>
<line x1="1278.2" y1="890" x2="1278.2" y2="895" stroke="#dde0e5" stroke-width="1"/>
<text x="1278.2" y="907" text-anchor="middle" class="ax" textLength="26.8" lengthAdjust="spacingAndGlyphs">09:25</text>
<text x="1278.2" y="918" text-anchor="middle" class="ax" textLength="32.2" lengthAdjust="spacingAndGlyphs">02&#8211;03</text>
<line x1="1333.6" y1="890" x2="1333.6" y2="895" stroke="#dde0e5" stroke-width="1"/>
<text x="1333.6" y="907" text-anchor="middle" class="ax" textLength="26.8" lengthAdjust="spacingAndGlyphs">09:27</text>
<text x="1333.6" y="918" text-anchor="middle" class="ax" textLength="32.2" lengthAdjust="spacingAndGlyphs">02&#8211;03</text>
<line x1="1389.0" y1="890" x2="1389.0" y2="895" stroke="#dde0e5" stroke-width="1"/>
<text x="1389.0" y="907" text-anchor="middle" class="ax" textLength="26.8" lengthAdjust="spacingAndGlyphs">09:29</text>
<text x="1389.0" y="918" text-anchor="middle" class="ax" textLength="32.2" lengthAdjust="spacingAndGlyphs">02&#8211;03</text>
<line x1="1444.5" y1="890" x2="1444.5" y2="895" stroke="#dde0e5" stroke-width="1"/>
<text x="1444.5" y="907" text-anchor="middle" class="ax" textLength="26.8" lengthAdjust="spacingAndGlyphs">09:31</text>
<text x="1444.5" y="918" text-anchor="middle" class="ax" textLength="32.2" lengthAdjust="spacingAndGlyphs">02&#8211;03</text>
<line x1="1499.9" y1="890" x2="1499.9" y2="895" stroke="#dde0e5" stroke-width="1"/>
<text x="1499.9" y="907" text-anchor="middle" class="ax" textLength="26.8" lengthAdjust="spacingAndGlyphs">09:33</text>
<text x="1499.9" y="918" text-anchor="middle" class="ax" textLength="32.2" lengthAdjust="spacingAndGlyphs">02&#8211;03</text>
<path d="M1111.9,890.0 L1139.6,890.0 L1167.3,890.0 L1195.0,890.0 L1222.7,890.0 L1250.5,658.5 L1278.2,664.2 L1305.9,658.5 L1333.6,663.3 L1361.3,666.2 L1389.0,666.2 L1416.8,665.0 L1444.5,660.6 L1472.2,661.2 L1499.9,663.3 L1527.6,664.3" fill="none" stroke="#4092e2" stroke-width="1.6" stroke-linejoin="round"/>
<circle cx="38" cy="279.6" r="6" fill="#fe5a73"/>
<text x="49" y="283.90000000000003" textLength="167.5" lengthAdjust="spacingAndGlyphs" class="lt">meter_vm_memory_swap_free</text>
<circle cx="233" cy="279.6" r="6" fill="#91a3de"/>
<text x="243.5" y="283.90000000000003" textLength="170.5" lengthAdjust="spacingAndGlyphs" class="lt">meter_vm_memory_swap_total</text>
<circle cx="556" cy="279.6" r="6" fill="#3498e6"/>
<text x="567" y="283.90000000000003" textLength="83.2" lengthAdjust="spacingAndGlyphs" class="lt">/etc/hostname</text>
<circle cx="666.4" cy="279.6" r="6" fill="#3cb6b6"/>
<text x="678.4" y="283.90000000000003" textLength="58.6" lengthAdjust="spacingAndGlyphs" class="lt">/etc/hosts</text>
<circle cx="753.2" cy="279.6" r="6" fill="#fdbe45"/>
<text x="764.8" y="283.90000000000003" textLength="89.6" lengthAdjust="spacingAndGlyphs" class="lt">/etc/resolv.conf</text>
<circle cx="1074" cy="279.6" r="6" fill="#fe5a73"/>
<text x="1085" y="283.90000000000003" textLength="113.4" lengthAdjust="spacingAndGlyphs" class="lt">meter_vm_disk_read</text>
<circle cx="1214.6" cy="279.6" r="6" fill="#91a3de"/>
<text x="1225.4" y="283.90000000000003" textLength="126.9" lengthAdjust="spacingAndGlyphs" class="lt">meter_vm_disk_written</text>
<circle cx="38" cy="629.4" r="6" fill="#fe5a73"/>
<text x="49" y="633.6999999999999" textLength="150.2" lengthAdjust="spacingAndGlyphs" class="lt">meter_vm_network_receive</text>
<circle cx="215.3" cy="629.4" r="6" fill="#91a3de"/>
<text x="226.4" y="633.6999999999999" textLength="155.6" lengthAdjust="spacingAndGlyphs" class="lt">meter_vm_network_transmit</text>
<circle cx="556" cy="629.4" r="6" fill="#3498e6"/>
<text x="567" y="633.6999999999999" textLength="142.4" lengthAdjust="spacingAndGlyphs" class="lt">meter_vm_tcp_curr_estab</text>
<circle cx="726" cy="629.4" r="6" fill="#3cb6b6"/>
<text x="736.7" y="633.6999999999999" textLength="97.5" lengthAdjust="spacingAndGlyphs" class="lt">meter_vm_tcp_tw</text>
<circle cx="850" cy="629.4" r="6" fill="#fdbe45"/>
<text x="861.5" y="633.6999999999999" textLength="109.7" lengthAdjust="spacingAndGlyphs" class="lt">meter_vm_tcp_alloc</text>
</svg>
<div class="ph" style="left:17px;top:232px;letter-spacing:0.000px">Memory Swap ( MB )<svg class="lk" width="10" height="12" viewBox="0 0 10 12"><path d="M3 5.2V3.2a2 2 0 0 1 4 0v2" fill="none" stroke="#8a96a8" stroke-width="1.7"/><rect x="0.85" y="5.1" width="8.3" height="6" rx="1.6" fill="none" stroke="#8a96a8" stroke-width="1.7"/></svg></div>
<div class="ph" style="left:535px;top:232px;letter-spacing:0.050px">File System Mountpoint Usage ( % )<svg class="lk" width="10" height="12" viewBox="0 0 10 12"><path d="M3 5.2V3.2a2 2 0 0 1 4 0v2" fill="none" stroke="#8a96a8" stroke-width="1.7"/><rect x="0.85" y="5.1" width="8.3" height="6" rx="1.6" fill="none" stroke="#8a96a8" stroke-width="1.7"/></svg></div>
<div class="ph" style="left:1053px;top:232px;letter-spacing:0.229px">Disk R/W ( KB/s )<svg class="lk" width="10" height="12" viewBox="0 0 10 12"><path d="M3 5.2V3.2a2 2 0 0 1 4 0v2" fill="none" stroke="#8a96a8" stroke-width="1.7"/><rect x="0.85" y="5.1" width="8.3" height="6" rx="1.6" fill="none" stroke="#8a96a8" stroke-width="1.7"/></svg></div>
<div class="ph" style="left:17px;top:582px;letter-spacing:0.100px">Network Bandwidth Usage ( KB/s )<svg class="lk" width="10" height="12" viewBox="0 0 10 12"><path d="M3 5.2V3.2a2 2 0 0 1 4 0v2" fill="none" stroke="#8a96a8" stroke-width="1.7"/><rect x="0.85" y="5.1" width="8.3" height="6" rx="1.6" fill="none" stroke="#8a96a8" stroke-width="1.7"/></svg></div>
<div class="ph" style="left:535px;top:582px;letter-spacing:0.036px">Network Status<svg class="lk" width="10" height="12" viewBox="0 0 10 12"><path d="M3 5.2V3.2a2 2 0 0 1 4 0v2" fill="none" stroke="#8a96a8" stroke-width="1.7"/><rect x="0.85" y="5.1" width="8.3" height="6" rx="1.6" fill="none" stroke="#8a96a8" stroke-width="1.7"/></svg></div>
<div class="ph" style="left:1053px;top:582px;letter-spacing:0.081px">Filefd Allocated<svg class="lk" width="10" height="12" viewBox="0 0 10 12"><path d="M3 5.2V3.2a2 2 0 0 1 4 0v2" fill="none" stroke="#8a96a8" stroke-width="1.7"/><rect x="0.85" y="5.1" width="8.3" height="6" rx="1.6" fill="none" stroke="#8a96a8" stroke-width="1.7"/></svg></div>
<!-- legend pager -->
<svg class="abs" style="left:980px;top:621px" width="50" height="17" viewBox="0 0 50 17">
<path d="M0.8 8.25 L10.1 1 L10.1 15.5 Z" fill="#aaaaaa"/>
<text x="15.5" y="13.2" font-family="Liberation Sans" font-size="12.2" fill="#333" textLength="17.4" lengthAdjust="spacingAndGlyphs">1/2</text>
<path d="M38.6 1 L48 8.25 L38.6 15.5 Z" fill="#2f4554"/>
</svg>

<div id="hdr">
  <div class="logo1">Skywalking</div>
  <svg class="abs" style="left:86px;top:4px" width="18" height="19" viewBox="0 0 18 19"><path d="M3.25 3.72 A7.3 7.3 0 1 1 10.13 15.92 A7.4 7.4 0 0 0 3.25 3.72 Z" fill="#fff"/></svg>
  <div class="logo2">Rocketbot</div>

  <div class="nv act" style="left:137px;width:103px;padding-left:28px">Dashboard
    <svg style="left:11px;top:8.5px" width="12" height="12" viewBox="0 0 12 12"><path d="M0.7 0.7H2.1V8.9H10.1V10.5H0.7Z" fill="#eceef1"/><path d="M3.1 2.1H4.2V3.5H7V4.1H9.7V7.8H3.1Z" fill="#eceef1"/></svg>
  </div>
  <div class="nv" style="left:270px;padding-left:19px">Topology
    <svg style="left:0.5px;top:8.5px" width="12" height="12" viewBox="0 0 12 12"><rect x="0.8" y="0.8" width="6" height="10.4" rx="1.8" fill="none" stroke="#c9ccd2" stroke-width="1.4"/><path d="M9.3 2.3 C10.7 4.5 10.6 7.8 8.8 10" fill="none" stroke="#c9ccd2" stroke-width="1.4"/></svg>
  </div>
  <div class="nv" style="left:385px;padding-left:17px">Trace
    <svg style="left:0px;top:8.5px" width="11" height="12" viewBox="0 0 11 12"><path d="M1.8 1.6 L2.6 6 L8.8 7.2 M2.6 6 L1.8 10.5" fill="none" stroke="#c9ccd2" stroke-width="1.3"/><circle cx="1.9" cy="1.9" r="1.5" fill="#c9ccd2"/><circle cx="1.9" cy="10.1" r="1.5" fill="#c9ccd2"/><circle cx="8.6" cy="7.1" r="1.5" fill="#c9ccd2"/></svg>
  </div>
  <div class="nv" style="left:476px;padding-left:18px">Profile
    <svg style="left:0px;top:10px" width="13" height="8" viewBox="0 0 13 8"><path d="M1 6.8 L4.6 2.3 L7.6 5.3 L12 0.8" fill="none" stroke="#c9ccd2" stroke-width="1.5"/></svg>
  </div>
  <div class="nv" style="left:574px;padding-left:17px">Log
    <svg style="left:0px;top:8px" width="10" height="12" viewBox="0 0 10 12"><path d="M0.6 2.2H3.4L5 0.6L6.6 2.2H9.4V11.4H0.6Z" fill="#c9ccd2"/><path d="M2.8 4.4H7.2M2.8 6.5H7.2M2.8 8.6H5.6" stroke="#202328" stroke-width="1"/></svg>
  </div>
  <div class="nv" style="left:655px;padding-left:16.5px">Alarm
    <svg style="left:0.5px;top:8px" width="11" height="12" viewBox="0 0 11 12"><path d="M5 0.8 L9.3 3.2 V8.7 L5 11.2 L0.7 8.7 V3.2 Z" fill="none" stroke="#c9ccd2" stroke-width="1.3"/><path d="M5 3.3V6.8" stroke="#c9ccd2" stroke-width="1.2"/><circle cx="5" cy="8.4" r="0.75" fill="#c9ccd2"/></svg>
  </div>

  <div class="lbl" style="left:1423px;top:13px;font-size:12.4px;color:#e8eaed">Auto</div>
  <div class="abs" style="left:1462px;top:9px;width:40px;height:20px;background:#fff;border-radius:3px"></div>
  <div class="lbl" style="left:1465px;top:11.5px;font-size:13px;color:#111">6</div>
  <div class="lbl" style="left:1506px;top:13px;font-size:12.4px;color:#e8eaed">s</div>
  <svg class="abs" style="left:1520px;top:10px" width="16" height="16" viewBox="0 0 18 16"><path d="M7.60 2.78 A5.4 5.4 0 0 1 13.89 10.28" fill="none" stroke="#fff" stroke-width="2.1"/><path d="M12.80 12.64 L16.87 11.01 L11.43 8.47 Z" fill="#fff"/><path d="M10.40 13.22 A5.4 5.4 0 0 1 4.11 5.72" fill="none" stroke="#fff" stroke-width="2.1"/><path d="M5.20 3.36 L1.13 4.99 L6.57 7.53 Z" fill="#fff"/></svg>
  <div class="lbl" style="left:1535px;top:13px;font-size:12.2px;color:#fff">Reload</div>
</div>

<div id="nav">
  <div class="tab" style="left:12px;width:56px">APM</div>
  <div class="tab" style="left:83px;width:85px">Database</div>
  <div class="tab" style="left:183px;width:54px">Istio</div>
  <div class="tab" style="left:252px;width:123px">Istio Data Plane</div>
  <div class="tab" style="left:390px;width:129px">SelfObservability</div>
  <div class="tab act" style="left:534px;width:48px;padding-left:15px;text-align:left">VM<i style="position:absolute;left:4px;top:9px;width:5px;height:10px;border-radius:2.5px;background:#448dfe"></i></div>
  <div class="tab" style="left:597px;width:109px">Web Browser</div>
</div>

<div id="bar">
  <!-- lock -->
  <svg class="ico" style="left:11px;top:22px" width="14" height="16" viewBox="0 0 14 16"><path d="M4.3 6.8V3.9a2.7 2.7 0 0 1 5.4 0v2.9" fill="none" stroke="#fff" stroke-width="2.1"/><rect x="2.2" y="7.1" width="9.6" height="6.8" rx="1.6" fill="none" stroke="#fff" stroke-width="2.2"/></svg>
  <div class="sep" style="left:39px;top:20px;height:20px"></div>
  <!-- folder -->
  <svg class="ico" style="left:53px;top:25px" width="18" height="14" viewBox="0 0 18 14"><path d="M2.3 1.8H7.7L9 3.1H15.6V12H2.3Z" fill="none" stroke="#fff" stroke-width="2" stroke-linejoin="round"/><path d="M2.3 3.9H15.6" stroke="#fff" stroke-width="1.6"/></svg>
  <div class="sep" style="left:83px;top:20px;height:20px"></div>
  <!-- download -->
  <svg class="ico" style="left:98px;top:22px" width="16" height="16" viewBox="0 0 16 16"><path d="M2 8V13.9H14V8" fill="none" stroke="#fff" stroke-width="2" stroke-linejoin="round"/><path d="M8 1V10.5" stroke="#e3e5e8" stroke-width="2"/><path d="M4.6 7.3L8 10.7L11.4 7.3" fill="none" stroke="#fff" stroke-width="2"/></svg>
  <div class="sep" style="left:127px;top:20px;height:20px"></div>
  <!-- refresh -->
  <svg class="ico" style="left:141px;top:22px" width="18" height="16" viewBox="0 0 18 16"><path d="M7.60 2.78 A5.4 5.4 0 0 1 13.89 10.28" fill="none" stroke="#fff" stroke-width="2"/><path d="M12.80 12.64 L16.87 11.01 L11.43 8.47 Z" fill="#fff"/><path d="M10.40 13.22 A5.4 5.4 0 0 1 4.11 5.72" fill="none" stroke="#fff" stroke-width="2"/><path d="M5.20 3.36 L1.13 4.99 L6.57 7.53 Z" fill="#fff"/></svg>
  <div class="sep" style="left:171px;top:20px;height:20px"></div>

  <div class="lbl" style="left:180px;top:12px;font-size:12.3px;color:#c3c7cf">Service Group</div>
  <div class="abs" style="left:178px;top:29px;width:120px;height:21px;background:#fff;border-radius:2px"></div>
  <div class="lbl" style="left:183px;top:32px;font-size:12.5px;color:#111">vm</div>
  <div class="sep" style="left:303px;top:11px;height:39px"></div>

  <!-- service icon -->
  <svg class="ico" style="left:321.5px;top:21.5px" width="15" height="14" viewBox="0 0 15 14"><path d="M3.2 1H11.8L13.5 5V12.5H1.5V5Z" fill="none" stroke="#fff" stroke-width="1.7" stroke-linejoin="round"/><path d="M1.5 6H13.5M7.5 1.2V5.6" stroke="#fff" stroke-width="1.6"/></svg>
  <div class="lbl" style="left:353px;top:13px;font-size:12.4px;color:#a9b0bd">Current Service</div>
  <div class="lbl" style="left:353px;top:28px;font-size:13.6px;color:#fff">vm::docker.for.mac.host.internal</div>
  <svg class="ico" style="left:565px;top:27.5px" width="10" height="7" viewBox="0 0 10 7"><path d="M1 1L5 5L9 1" fill="none" stroke="#fff" stroke-width="1.8"/></svg>
  <div class="sep" style="left:594px;top:4px;height:52px"></div>

  <svg class="ico" style="left:612px;top:23.5px" width="16" height="11" viewBox="0 0 16 11"><path d="M5.3 0.8L1 5.5L5.3 10.2M10.7 0.8L15 5.5L10.7 10.2" fill="none" stroke="#fff" stroke-width="1.6"/></svg>
  <div class="lbl" style="left:643px;top:21.5px;font-size:12.6px;color:#c3c7cf">Current Endpoint</div>
  <svg class="ico" style="left:758px;top:27.5px" width="10" height="7" viewBox="0 0 10 7"><path d="M1 1L5 5L9 1" fill="none" stroke="#fff" stroke-width="1.8"/></svg>
  <div class="sep" style="left:787px;top:4px;height:52px"></div>

  <svg class="ico" style="left:805.5px;top:21.5px" width="15" height="14" viewBox="0 0 15 14"><path d="M1.8 8V3.2A2.2 2.2 0 0 1 4 1H11A2.2 2.2 0 0 1 13.2 3.2V8" fill="none" stroke="#fff" stroke-width="1.9"/><rect x="0.5" y="9" width="14" height="4.5" rx="2.25" fill="#fff"/><circle cx="11.2" cy="11.25" r="1" fill="#2c3039"/></svg>
  <div class="lbl" style="left:836.5px;top:21.5px;font-size:12.5px;color:#c3c7cf">Current Instance</div>
  <svg class="ico" style="left:948px;top:27.5px" width="10" height="7" viewBox="0 0 10 7"><path d="M1 1L5 5L9 1" fill="none" stroke="#fff" stroke-width="1.8"/></svg>
  <div class="sep" style="left:977px;top:4px;height:52px"></div>
</div>

<div id="sub">
  <div class="lbl" style="left:12px;top:13px;font-size:13.5px;color:#448dfe;-webkit-text-stroke:0.35px #448dfe">VM</div>
  <div class="abs" style="left:12px;top:38.8px;width:20px;height:2px;background:#448dfe"></div>
  <svg class="ico" style="left:53px;top:16.5px" width="14" height="11" viewBox="0 0 14 11"><path d="M0.8 0.8H5L6.2 2H13.2V10.2H0.8Z" fill="none" stroke="#333" stroke-width="1.3" stroke-linejoin="round"/><path d="M0.8 3.2H13.2" stroke="#333" stroke-width="1"/></svg>
  <svg class="ico" style="left:80px;top:15.5px" width="12" height="12" viewBox="0 0 12 12"><path d="M0.8 5.5V11H11.2V5.5" fill="none" stroke="#333" stroke-width="1.3"/><path d="M6 0.3V8M3.2 5.2L6 8L8.8 5.2" fill="none" stroke="#333" stroke-width="1.3"/></svg>
</div>

<div id="foot">
  <div class="lbl" style="left:1115px;top:6.5px;font-family:'Liberation Mono',monospace;font-size:13px;color:#333;-webkit-text-stroke:0.25px #333;transform:scaleX(0.834);transform-origin:0 0">2021-02-03 09:19 ~ 2021-02-03 09:34</div>
  <div class="lbl" style="left:1400px;top:7px;font-size:12px;color:#333">En</div>
  <div class="lbl" style="left:1429px;top:7px;font-size:12.5px;color:#333">Server Zone UTC +8</div>
</div>
</body></html>
